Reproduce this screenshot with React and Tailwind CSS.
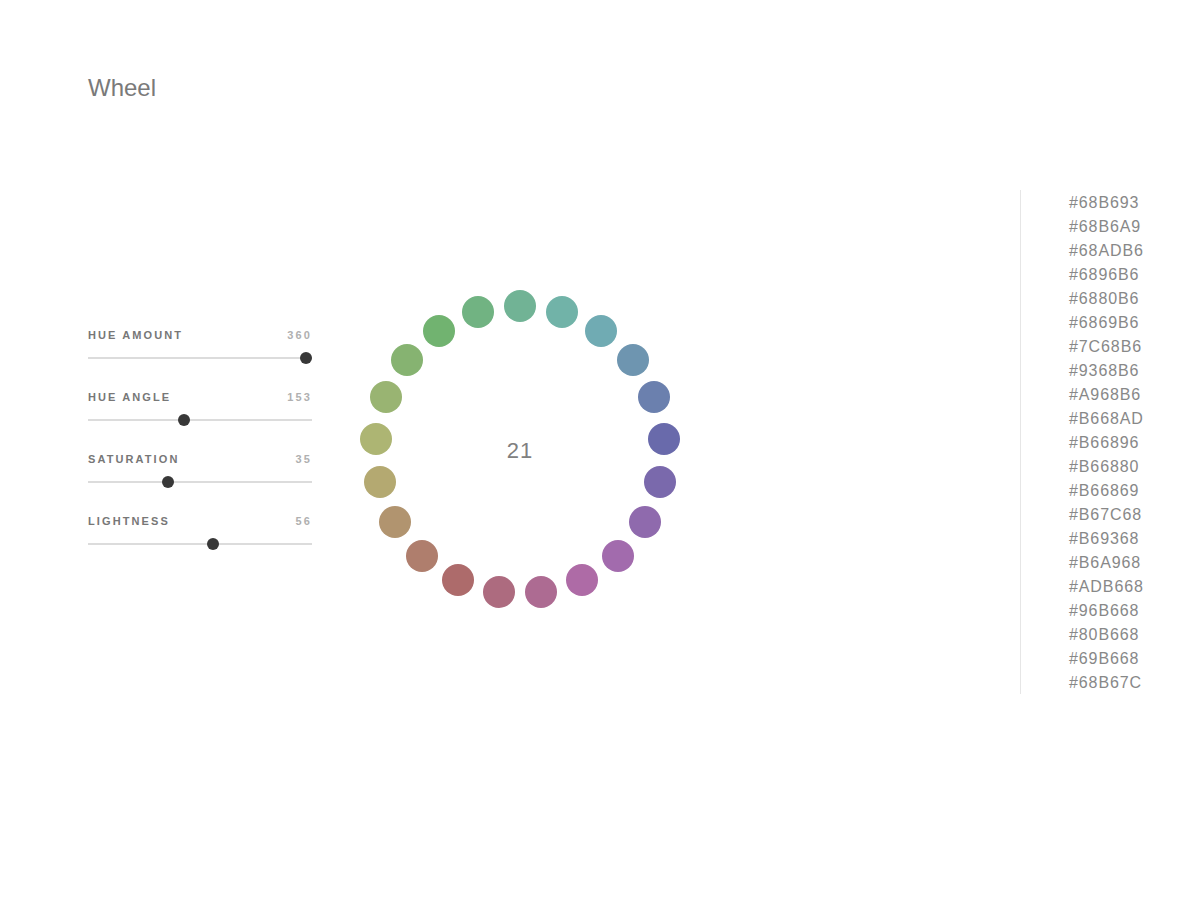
import { useState } from "react";

const COLORS = [
  "#68B693", "#68B6A9", "#68ADB6", "#6896B6", "#6880B6", "#6869B6", "#7C68B6",
  "#9368B6", "#A968B6", "#B668AD", "#B66896", "#B66880", "#B66869", "#B67C68",
  "#B69368", "#B6A968", "#ADB668", "#96B668", "#80B668", "#69B668", "#68B67C",
];

const SLIDERS = [
  { label: "Hue Amount", value: 360, max: 360 },
  { label: "Hue Angle", value: 153, max: 360 },
  { label: "Saturation", value: 35, max: 100 },
  { label: "Lightness", value: 56, max: 100 },
];

function Slider({ label, value, max }) {
  const pct = value / max;
  return (
    <div className="flex flex-col">
      <div className="flex h-4 items-center justify-between text-[11px] font-bold uppercase tracking-[2.1px]">
        <span className="text-[#777]">{label}</span>
        <span className="text-[#b0b0b0]">{value}</span>
      </div>
      <div className="relative h-[30px]">
        <div className="absolute left-0 right-0 top-[14px] h-[2px] bg-[#dcdcdc]" />
        {/* thumb travels between 6px and 218px */}
        <div
          className="absolute top-[9px] h-3 w-3 rounded-full bg-[#383838]"
          style={{ left: pct * 212 }}
        />
      </div>
    </div>
  );
}

function Wheel({ colors }) {
  const n = colors.length;
  return (
    <div className="relative h-[320px] w-[320px] shrink-0">
      {colors.map((c, i) => {
        const a = (i / n) * Math.PI * 2;
        const x = 160 + 144 * Math.sin(a);
        const y = 160 - 144 * Math.cos(a);
        return (
          <div
            key={c}
            className="absolute h-8 w-8 rounded-full saturate-[.85]"
            style={{ left: x - 16, top: y - 16, backgroundColor: c }}
          />
        );
      })}
      <div className="flex h-full w-full items-center justify-center text-[22px] tracking-[1px] text-[#808080]">
        {n}
      </div>
    </div>
  );
}

export default function App() {
  const [sliders] = useState(SLIDERS);

  return (
    <div
      className="min-h-[900px] w-[1200px] bg-white px-[88px] pt-[74px]"
      style={{ fontFamily: '"Liberation Sans", Arial, sans-serif' }}
    >
      <h1 className="text-[24px] leading-7 text-[#7a7a7a]">Wheel</h1>

      <div className="mt-[88px] flex items-start">
        <div className="mt-[137px] flex w-[224px] shrink-0 flex-col gap-4">
          {sliders.map((s) => (
            <Slider key={s.label} {...s} />
          ))}
        </div>

        <div className="ml-12 mt-[100px]">
          <Wheel colors={COLORS} />
        </div>

        <div className="ml-[340px] flex flex-col border-l border-[#e6e6e6] pl-12">
          {COLORS.map((c) => (
            <div key={c} className="h-6 pt-px text-[16px] leading-6 tracking-[0.9px] text-[#888]">
              {c}
            </div>
          ))}
        </div>
      </div>
    </div>
  );
}
